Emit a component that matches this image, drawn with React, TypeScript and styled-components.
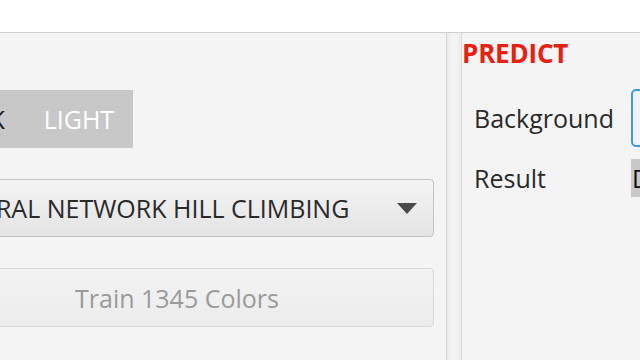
import React from "react";
import styled, { createGlobalStyle } from "styled-components";

const Global = createGlobalStyle`
  html, body { margin: 0; padding: 0; }
  body { width: 640px; height: 360px; overflow: hidden; background: #f4f4f4;
    font-family: "Open Sans", "Noto Sans", sans-serif; }
`;

const Page = styled.div`
  width: 640px;
  height: 360px;
  display: flex;
  flex-direction: column;
  overflow: hidden;
`;

const TopBar = styled.div`
  height: 32px;
  background: #ffffff;
  border-bottom: 1px solid #cfcfcf;
  flex-shrink: 0;
`;

const Body = styled.div`
  flex: 1;
  display: flex;
  background: #f4f4f4;
`;

const LeftPanel = styled.div`
  width: 446px;
  flex-shrink: 0;
  display: flex;
  justify-content: flex-end;
  overflow: hidden;
`;

const LeftColumn = styled.div`
  width: 514px;
  flex-shrink: 0;
  padding: 57px 12px 0 0;
  display: flex;
  flex-direction: column;
  align-items: flex-start;
  gap: 31px;
`;

const ToggleGroup = styled.div`
  display: flex;
  height: 58px;
  background: #c8c8c8;
`;

const Toggle = styled.div<{ $selected?: boolean }>`
  padding: 0 19px 0 20px;
  display: flex;
  align-items: center;
  font-size: 25px;
  color: ${(p) => (p.$selected ? "#1a1a1a" : "#ffffff")};
  background: #c8c8c8;
`;

const Combo = styled.div`
  box-sizing: border-box;
  width: 100%;
  height: 58px;
  border: 1px solid #c4c4c4;
  border-radius: 4px;
  background: linear-gradient(#f4f4f4, #e4e4e4);
  display: flex;
  align-items: center;
  padding: 0 16px 0 24px;
  font-size: 25px;
  color: #2a2a2a;
  white-space: nowrap;
`;

const ComboText = styled.span`
  flex: 1;
  overflow: hidden;
`;

const Arrow = styled.div`
  width: 0;
  height: 0;
  border-left: 10px solid transparent;
  border-right: 10px solid transparent;
  border-top: 11px solid #4a4a4a;
`;

const TrainButton = styled.div`
  box-sizing: border-box;
  width: 100%;
  height: 59px;
  border: 1px solid #d8d8d8;
  border-radius: 4px;
  background: linear-gradient(#f3f3f3, #ececec);
  display: flex;
  align-items: center;
  justify-content: center;
  font-size: 25px;
  color: #9a9a9a;
`;

const Divider = styled.div`
  width: 14px;
  flex-shrink: 0;
  border-left: 1px solid #d2d2d2;
  border-right: 1px solid #dcdcdc;
  background: linear-gradient(90deg, #ececec, #f6f6f6 50%, #ececec);
`;

const RightPanel = styled.div`
  flex: 1;
  padding: 4px 0 0 0;
  display: flex;
  flex-direction: column;
  overflow: hidden;
`;

const Title = styled.div`
  font-weight: 700;
  font-size: 26px;
  color: #e8200f;
  line-height: 32px;
  letter-spacing: -0.2px;
`;

const FormGrid = styled.div`
  display: grid;
  grid-template-columns: auto 1fr;
  column-gap: 17px;
  row-gap: 12px;
  margin-top: 20px;
  padding-left: 12px;
  align-items: center;
`;

const Label = styled.div`
  font-size: 25px;
  color: #2a2a2a;
  white-space: nowrap;
`;

const Field = styled.div`
  box-sizing: border-box;
  height: 58px;
  border: 2px solid #3d9ae0;
  border-radius: 5px;
  background: #eef4fa;
  width: 60px;
`;

const ResultBox = styled.div`
  height: 38px;
  background: #c8c8c8;
  font-size: 25px;
  color: #111;
  display: flex;
  align-items: center;
  padding-left: 1px;
  width: 60px;
`;

export default function App() {
  return (
    <Page>
      <Global />
      <TopBar />
      <Body>
        <LeftPanel>
          <LeftColumn>
            <ToggleGroup>
              <Toggle $selected>DARK</Toggle>
              <Toggle>LIGHT</Toggle>
            </ToggleGroup>
            <Combo>
              <ComboText>NEURAL NETWORK HILL CLIMBING</ComboText>
              <Arrow />
            </Combo>
            <TrainButton>Train 1345 Colors</TrainButton>
          </LeftColumn>
        </LeftPanel>
        <Divider />
        <RightPanel>
          <Title>PREDICT</Title>
          <FormGrid>
            <Label>Background</Label>
            <Field />
            <Label>Result</Label>
            <ResultBox>D</ResultBox>
          </FormGrid>
        </RightPanel>
      </Body>
    </Page>
  );
}
